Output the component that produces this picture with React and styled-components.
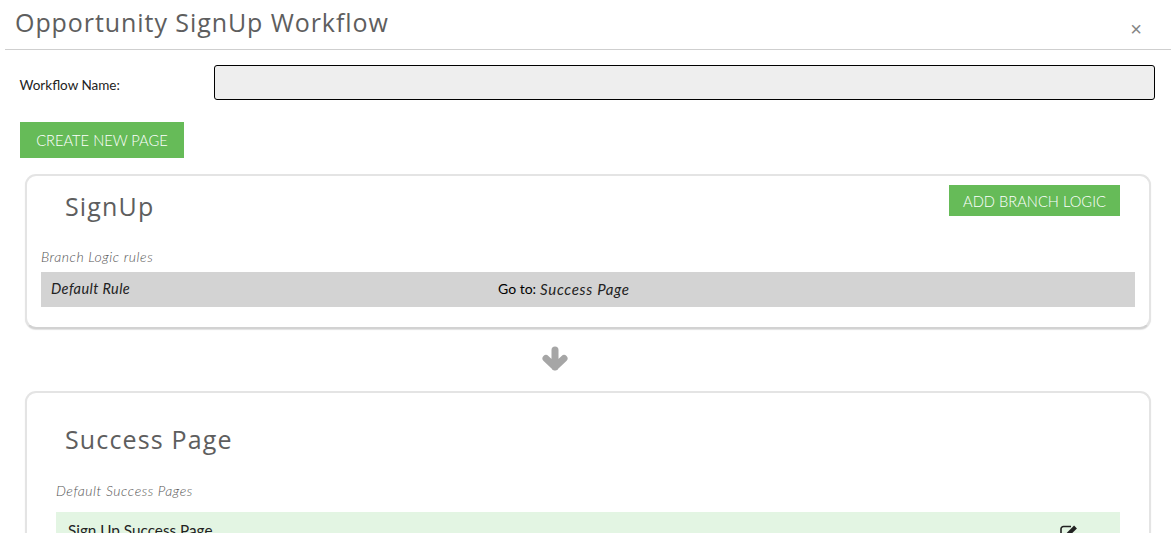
import React from "react";
import styled, { createGlobalStyle } from "styled-components";

const GlobalStyle = createGlobalStyle`
	html, body {
		margin: 0;
		padding: 0;
		height: 533px;
		overflow: hidden;
		background: #fff;
		font-family: "Lato", "Liberation Sans", sans-serif;
		color: #222;
	}
	* {
		box-sizing: border-box;
	}
`

const Modal = styled.div`
	padding-left: 5px;
	height: 533px;
	overflow: hidden;
`

const Header = styled.div`
	display: flex;
	justify-content: space-between;
	height: 50px;
	padding: 5px 29px 0 10px;
	border-bottom: 1px solid #cfcfcf;
`

const Title = styled.h1`
	margin: 0;
	font-family: "Open Sans", sans-serif;
	font-size: 25px;
	line-height: 34px;
	font-weight: 400;
	letter-spacing: 0.93px;
	color: #5e5e5e;
`

const Close = styled.span`
	font-family: "Liberation Sans", sans-serif;
	font-size: 20px;
	line-height: 20px;
	margin-top: 14px;
	color: #858585;
`

const Body = styled.div`
	padding: 15px 16px 0 15px;
`

const NameRow = styled.div`
	display: flex;
	align-items: center;
	height: 35px;
`

const NameLabel = styled.label`
	width: 194px;
	font-size: 13.5px;
	font-weight: 400;
	padding-top: 4px;
	margin-left: -0.5px;
	color: #222;
`

const NameInput = styled.input`
	flex: 1;
	height: 35px;
	background: #eee;
	border: 1px solid #000;
	border-radius: 3px;
`

const GreenButton = styled.button`
	display: block;
	width: ${p => p.$width}px;
	height: ${p => p.$height}px;
	padding: 0;
	border: 0;
	background: #66bb58;
	color: #fff;
	font-family: inherit;
	font-size: 14.7px;
	font-weight: 300;
	white-space: nowrap;
`

const CreateButton = styled(GreenButton)`
	margin: 22px 0 16px;
`

const Card = styled.section`
	margin: 0 4px 0 5px;
	border: 2px solid #e4e4e4;
	border-bottom-color: #d2d2d2;
	border-radius: 11px;
	box-shadow: 0 1px 1px rgba(0, 0, 0, 0.12);
	background: #fff;
	padding: ${p => p.$pad};
`

const CardHead = styled.div`
	display: flex;
	justify-content: space-between;
	align-items: flex-start;
	padding: 0 ${p => p.$right}px 0 ${p => p.$left}px;
`

const CardTitle = styled.h2`
	margin: ${p => p.$top}px 0 0;
	font-family: "Open Sans", sans-serif;
	font-size: 25px;
	line-height: 34px;
	font-weight: 400;
	letter-spacing: 1.15px;
	color: #5e5e5e;
`

const Note = styled.div`
	font-size: 14px;
	font-style: italic;
	font-weight: 300;
	letter-spacing: 0.53px;
	line-height: 16px;
	color: #555;
	margin: ${p => p.$margin};
`

const RuleRow = styled.div`
	display: flex;
	align-items: center;
	height: 35px;
	padding: 0 0 2px 10px;
	background: #d3d3d3;
	font-size: 14.5px;
	color: #222;
`

const RuleName = styled.span`
	width: 447px;
	font-style: italic;
	letter-spacing: 0.4px;
`

const GoTo = styled.b`
	font-weight: 400;
	font-size: 14px;
	margin-right: 4px;
	color: #000;
`

const Target = styled.i`
	font-size: 15px;
	letter-spacing: 0.7px;
`

const ArrowRow = styled.div`
	display: flex;
	justify-content: center;
	align-items: flex-start;
	height: 62px;
	padding: 17px 66px 0 0;
`

const SuccessRow = styled.div`
	display: flex;
	justify-content: space-between;
	align-items: flex-start;
	height: 40px;
	padding: 9px 42px 0 12px;
	background: #e3f5e3;
	font-size: 15.3px;
	line-height: 18px;
	color: #222;
`

const EditIcon = styled.svg`
	width: 18px;
	height: 18px;
	margin-top: 3px;
`

const DownArrow = () => (
	<svg width="26" height="25" viewBox="0 0 26 25" fill="none" stroke="#a6a6a6" strokeWidth="7" strokeLinecap="round" strokeLinejoin="round">
		<path d="M13 4V21M4 12.5L13 21L22 12.5" />
	</svg>
)

const App = () => {
	return (
		<Modal>
			<GlobalStyle />
			<Header>
				<Title>Opportunity SignUp Workflow</Title>
				<Close>×</Close>
			</Header>
			<Body>
				<NameRow>
					<NameLabel>Workflow Name:</NameLabel>
					<NameInput disabled />
				</NameRow>
				<CreateButton $width={164} $height={36}>CREATE NEW PAGE</CreateButton>
				<Card $pad="9px 14px 20px 14px">
					<CardHead $left={24} $right={15}>
						<CardTitle $top={4}>SignUp</CardTitle>
						<GreenButton $width={171} $height={31}>ADD BRANCH LOGIC</GreenButton>
					</CardHead>
					<Note $margin="26px 0 7px 0">Branch Logic rules</Note>
					<RuleRow>
						<RuleName>Default Rule</RuleName>
						<GoTo>Go to:</GoTo>
						<Target>Success Page</Target>
					</RuleRow>
				</Card>
				<ArrowRow><DownArrow /></ArrowRow>
				<Card $pad="29px 29px 0 29px">
					<CardHead $left={9} $right={0}>
						<CardTitle $top={0}>Success Page</CardTitle>
					</CardHead>
					<Note $margin="27px 0 13px 0">Default Success Pages</Note>
					<SuccessRow>
						<span>Sign Up Success Page</span>
						<EditIcon viewBox="0 0 18 18" fill="none">
							<path d="M11 2.5H3.5A2.5 2.5 0 0 0 1 5V14.5A2.5 2.5 0 0 0 3.5 17H12.5A2.5 2.5 0 0 0 15 14.5V10" stroke="#222" strokeWidth="1.6" />
							<path d="M6.5 12L15.5 3" stroke="#222" strokeWidth="4" />
						</EditIcon>
					</SuccessRow>
				</Card>
			</Body>
		</Modal>
	)
}

export default App;
